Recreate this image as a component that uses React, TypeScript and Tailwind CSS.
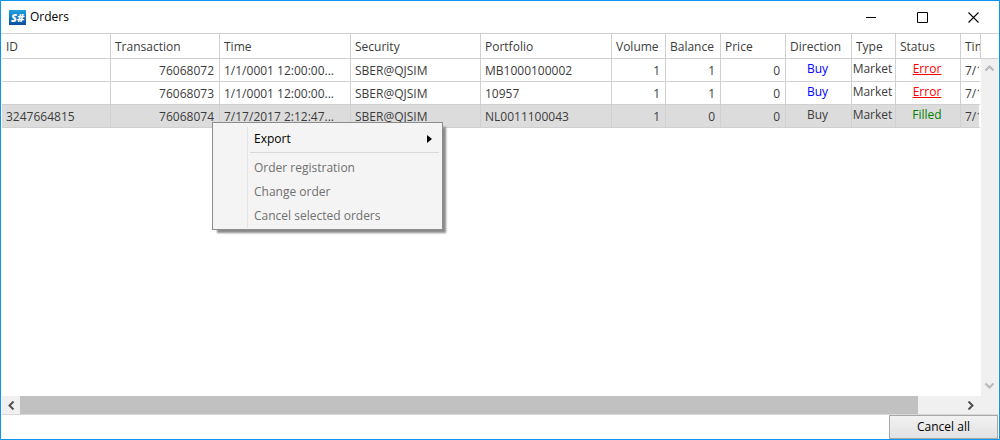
import type { ReactNode } from "react";

type Align = "left" | "right" | "center";

interface Column {
  title: string;
  width: string;
  align: Align;
}

const columns: Column[] = [
  { title: "ID", width: "w-[109px]", align: "left" },
  { title: "Transaction", width: "w-[109px]", align: "right" },
  { title: "Time", width: "w-[131px]", align: "left" },
  { title: "Security", width: "w-[130px]", align: "left" },
  { title: "Portfolio", width: "w-[131px]", align: "left" },
  { title: "Volume", width: "w-[54px]", align: "right" },
  { title: "Balance", width: "w-[55px]", align: "right" },
  { title: "Price", width: "w-[65px]", align: "right" },
  { title: "Direction", width: "w-[66px]", align: "center" },
  { title: "Type", width: "w-[44px]", align: "center" },
  { title: "Status", width: "w-[65px]", align: "center" },
  { title: "Time", width: "w-auto", align: "left" },
];

interface Order {
  id: string;
  transaction: string;
  time: string;
  portfolio: string;
  balance: string;
  filled: boolean;
}

const orders: Order[] = [
  { id: "", transaction: "76068072", time: "1/1/0001 12:00:00...", portfolio: "MB1000100002", balance: "1", filled: false },
  { id: "", transaction: "76068073", time: "1/1/0001 12:00:00...", portfolio: "10957", balance: "1", filled: false },
  { id: "3247664815", transaction: "76068074", time: "7/17/2017 2:12:47...", portfolio: "NL0011100043", balance: "0", filled: true },
];

const alignClass: Record<Align, string> = {
  left: "text-left pl-1 pt-0.5",
  right: "text-right pr-[5px] pt-0.5",
  center: "text-center pr-0.5 pb-0.5",
};

function cellsOf(order: Order): ReactNode[] {
  return [
    order.id,
    order.transaction,
    order.time,
    "SBER@QJSIM",
    order.portfolio,
    "1",
    order.balance,
    "0",
    <span className={order.filled ? "" : "text-[#0000ff]"}>Buy</span>,
    "Market",
    order.filled ? (
      <span className="text-[#008000]">Filled</span>
    ) : (
      <a href="#error" className="text-[#ff0000] underline">
        Error
      </a>
    ),
    "7/17/2017",
  ];
}

function Chevron({ d }: { d: string }) {
  return (
    <svg width="9" height="9" viewBox="0 0 9 9" fill="none" stroke="currentColor" strokeWidth="2">
      <path d={d} />
    </svg>
  );
}

function TitleBar() {
  return (
    <header className="flex h-[33px] items-center border-b border-[#cfcfcf] pl-2 text-black">
      <span className="flex h-[15px] w-[17px] items-center justify-center bg-linear-to-b from-[#1fa3df] to-[#0c4f9e] text-[11px] leading-none font-extrabold text-white italic">
        S#
      </span>
      <h1 className="flex-1 pl-1 text-xs">Orders</h1>
      <div className="flex h-full">
        <button type="button" aria-label="Minimize" className="flex w-[51px] items-center justify-center">
          <svg width="11" height="11" viewBox="0 0 11 11" stroke="#000" fill="none">
            <path d="M0 5.5H10" />
          </svg>
        </button>
        <button type="button" aria-label="Maximize" className="flex w-[51px] items-center justify-center">
          <svg width="11" height="11" viewBox="0 0 11 11" stroke="#000" fill="none">
            <path d="M.5 .5H10.5V10.5H.5Z" />
          </svg>
        </button>
        <button type="button" aria-label="Close" className="flex w-[51px] items-center justify-center">
          <svg width="11" height="11" viewBox="0 0 11 11" stroke="#000" fill="none" strokeWidth="1.1">
            <path d="M.5 .5L10.5 10.5M10.5 .5L.5 10.5" />
          </svg>
        </button>
      </div>
    </header>
  );
}

function OrdersTable() {
  return (
    <table className="w-full table-fixed border-separate border-spacing-0 text-[#3c3c3c]">
      <thead>
        <tr className="h-[25px]">
          {columns.map((column, i) => (
            <th
              key={i}
              className={`${column.width} overflow-hidden border-r border-b border-[#d0d0d0] p-0 pt-0.5 pl-1 text-left font-normal whitespace-nowrap`}
            >
              {column.title}
            </th>
          ))}
        </tr>
      </thead>
      <tbody>
        {orders.map((order) => (
          <tr key={order.transaction} className={order.filled ? "h-[23px] bg-[#dcdcdc]" : "h-[23px]"}>
            {cellsOf(order).map((cell, i) => (
              <td
                key={i}
                className={`overflow-hidden border-r border-b border-[#d0d0d0] p-0 leading-[18px] whitespace-nowrap last:border-r-2 last:border-r-white ${alignClass[columns[i].align]}`}
              >
                {cell}
              </td>
            ))}
          </tr>
        ))}
      </tbody>
    </table>
  );
}

function ContextMenu() {
  return (
    <div
      role="menu"
      className="absolute top-[88px] left-[211px] w-[231px] border border-[#8c8c8c] bg-[#f4f4f4] pt-1 pb-px text-[#707070] shadow-[4px_4px_2px_-1px_#8a8a8a]"
    >
      <div className="ml-[34px] border-l border-[#e4e4e4]">
        <button type="button" role="menuitem" className="flex h-6 w-full items-center justify-between pr-[10px] pl-[6px] text-black">
          Export
          <svg width="5" height="8" viewBox="0 0 5 8" fill="#000">
            <path d="M0 0L5 4L0 8Z" />
          </svg>
        </button>
        <hr className="mt-px mr-[3px] mb-[3px] ml-0.5 border-[#d8d8d8]" />
        <button type="button" role="menuitem" disabled className="flex h-6 w-full items-center pl-[6px]">
          Order registration
        </button>
        <button type="button" role="menuitem" disabled className="flex h-6 w-full items-center pl-[6px]">
          Change order
        </button>
        <button type="button" role="menuitem" disabled className="flex h-6 w-full items-center pl-[6px]">
          Cancel selected orders
        </button>
      </div>
    </div>
  );
}

export default function App() {
  return (
    <div className="flex min-h-screen flex-col border border-[#0c95ec] bg-white font-['Open_Sans','Noto_Sans',sans-serif] text-xs">
      <TitleBar />
      <main className="relative flex flex-1 flex-col px-px">
        <div className="flex flex-1">
          <div className="min-w-0 flex-1">
            <OrdersTable />
          </div>
          <div className="flex w-[17px] flex-col">
            <div className="h-[25px] border-b border-[#d0d0d0]" />
            <div className="flex flex-1 flex-col justify-between bg-[#f0f0f0] text-[#b8b8b8]">
              <button type="button" aria-label="Scroll up" className="flex h-[19px] items-center justify-center">
                <Chevron d="M.5 6.5L4.5 2.5L8.5 6.5" />
              </button>
              <button type="button" aria-label="Scroll down" className="flex h-[21px] items-center justify-center">
                <Chevron d="M.5 2.5L4.5 6.5L8.5 2.5" />
              </button>
            </div>
          </div>
        </div>
        <div className="flex h-[19px] border-b border-[#d8d8d8] bg-[#f0f0f0] text-[#505050]">
          <button type="button" aria-label="Scroll left" className="flex w-[18px] items-center justify-center">
            <Chevron d="M6.5 .5L2.5 4.5L6.5 8.5" />
          </button>
          <div className="mr-[44px] h-[18px] flex-1 bg-[#c1c1c1]" />
          <button type="button" aria-label="Scroll right" className="mr-[19px] flex w-[17px] items-center justify-center">
            <Chevron d="M2.5 .5L6.5 4.5L2.5 8.5" />
          </button>
        </div>
        <ContextMenu />
      </main>
      <footer className="flex justify-end pr-px">
        <button
          type="button"
          className="h-6 w-[109px] border border-[#a8a8a8] bg-linear-to-b from-[#f2f2f2] to-[#e2e2e2] text-center text-black"
        >
          Cancel all
        </button>
      </footer>
    </div>
  );
}
